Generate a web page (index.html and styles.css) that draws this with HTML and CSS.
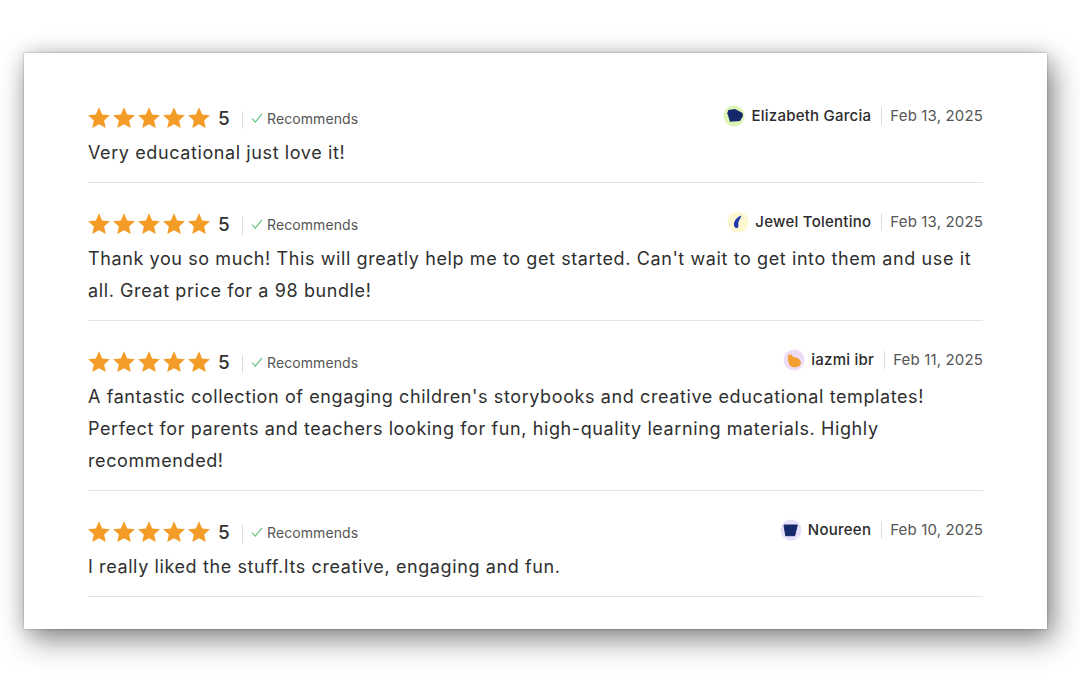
FILE: index.html
```html
<!DOCTYPE html>
<html lang="en">
<head>
<meta charset="utf-8">
<title>Reviews</title>
<link rel="stylesheet" href="styles.css">
</head>
<body>
<svg class="defs" width="0" height="0" aria-hidden="true">
  <symbol id="star" viewBox="0 0 24 24"><path d="M12 1.300L15.170 8.430 22.940 9.250 17.140 14.470 18.760 22.100 12 18.200 5.240 22.100 6.860 14.470 1.060 9.250 8.830 8.430z"/></symbol>
  <symbol id="stars" viewBox="0 0 124 24">
    <use href="#star" x="0" width="24" height="24"/><use href="#star" x="25" width="24" height="24"/><use href="#star" x="50" width="24" height="24"/><use href="#star" x="75" width="24" height="24"/><use href="#star" x="100" width="24" height="24"/>
  </symbol>
  <symbol id="check" viewBox="0 0 12 12"><path d="M1 6.500l3.300 3.600L11 1.800" fill="none" stroke="#5fbf7f" stroke-width="1.100"/></symbol>
</svg>
<main class="card">
  <article class="review">
    <header class="head">
      <div class="rating">
        <svg class="stars"><use href="#stars"/></svg><span class="score">5</span>
        <span class="rec"><svg class="check"><use href="#check"/></svg>Recommends</span>
      </div>
      <div class="meta">
        <svg class="avatar" viewBox="0 0 22 22"><circle cx="11" cy="11" r="10.500" fill="#def5b5"/><path d="M5.300 5L12 4 19.500 8 20 11 17 16 7 16.700 4.300 8.300z" fill="#14296b"/></svg>
        <span class="name">Elizabeth Garcia</span><span class="date">Feb 13, 2025</span>
      </div>
    </header>
    <p class="text">Very educational just love it!</p>
  </article>
  <article class="review">
    <header class="head">
      <div class="rating">
        <svg class="stars"><use href="#stars"/></svg><span class="score">5</span>
        <span class="rec"><svg class="check"><use href="#check"/></svg>Recommends</span>
      </div>
      <div class="meta">
        <svg class="avatar" viewBox="0 0 22 22"><circle cx="11" cy="11" r="10.500" fill="#fdf8d2"/><path d="M14.500 4.500C11 5.500 8 8 7 12 6.500 15 8 17.500 10.500 17 12 16 11 13 11.500 11 12 9 13.500 7.500 14.500 4.500z" fill="#2438b0"/></svg>
        <span class="name">Jewel Tolentino</span><span class="date">Feb 13, 2025</span>
      </div>
    </header>
    <p class="text">Thank you so much! This will greatly help me to get started. Can't wait to get into them and use it all. Great price for a 98 bundle!</p>
  </article>
  <article class="review">
    <header class="head">
      <div class="rating">
        <svg class="stars"><use href="#stars"/></svg><span class="score">5</span>
        <span class="rec"><svg class="check"><use href="#check"/></svg>Recommends</span>
      </div>
      <div class="meta">
        <svg class="avatar" viewBox="0 0 22 22"><circle cx="11" cy="11" r="10.500" fill="#efdcf8"/><path d="M5 7C6 5 9 5 10 8 13 8 18 10 18 14 17.500 18 12 19 9 18 6 17 4.500 11 5 7z" fill="#f2a032"/></svg>
        <span class="name">iazmi ibr</span><span class="date">Feb 11, 2025</span>
      </div>
    </header>
    <p class="text">A fantastic collection of engaging children's storybooks and creative educational templates! Perfect for parents and teachers looking for fun, high-quality learning materials. Highly recommended!</p>
  </article>
  <article class="review">
    <header class="head">
      <div class="rating">
        <svg class="stars"><use href="#stars"/></svg><span class="score">5</span>
        <span class="rec"><svg class="check"><use href="#check"/></svg>Recommends</span>
      </div>
      <div class="meta">
        <svg class="avatar" viewBox="0 0 22 22"><circle cx="11" cy="11" r="10.500" fill="#e8e0fb"/><path d="M4 6H17.300L14.700 16.700H5.700z" fill="#14296b" stroke="#14296b" stroke-linejoin="round"/></svg>
        <span class="name">Noureen</span><span class="date">Feb 10, 2025</span>
      </div>
    </header>
    <p class="text">I really liked the stuff.Its creative, engaging and fun.</p>
  </article>
</main>
</body>
</html>
```
FILE: styles.css
```css
* { box-sizing: border-box; }
html, body { margin: 0; height: 700px; overflow: hidden; background: #fff; }
body { padding: 53px 33px 0 24px; font-family: Inter, "Liberation Sans", sans-serif; color: #2b2b2b; }
.defs { position: absolute; }
.card {
  width: 1023px;
  height: 576px;
  padding: 30px 64px 0;
  background: #fff;
  box-shadow: 0 0 2px rgba(0,0,0,.3), 0 0 18px rgba(0,0,0,.14), 6px 11px 28px rgba(0,0,0,.45);
}
.review { padding-top: 23px; padding-bottom: 13px; border-bottom: 1px solid #e2e2e2; }
.review + .review { padding-top: 29px; }
.head { display: flex; justify-content: space-between; align-items: flex-start; height: 24px; }
.rating { display: flex; align-items: center; height: 24px; }
.stars { width: 124px; height: 24px; fill: #f39c27; margin: 0 7px 0 -1px; }
.score { font-size: 19px; font-weight: 500; color: #333; width: 18px; margin-right: 6px; }
.rec { display: flex; align-items: center; height: 18px; margin-top: 4px; padding: 0 0 4px 8px; border-left: 1px solid #ddd; font-size: 14px; letter-spacing: .1px; color: #555; }
.check { width: 12px; height: 12px; margin-right: 4px; }
.meta { display: flex; align-items: center; height: 22px; margin-top: -1px; }
.avatar { width: 22px; height: 22px; margin-right: 6px; }
.name { font-size: 15px; font-weight: 500; letter-spacing: .25px; margin-top: -2px; color: #2b2b2b; }
.date { font-size: 15px; letter-spacing: .15px; color: #555; margin-left: 10px; padding-left: 8px; border-left: 1px solid #ddd; line-height: 18px; }
.text { margin: 0; padding-top: 7px; font-size: 18px; line-height: 32px; letter-spacing: .6px; color: #2f2f2f; }
```
